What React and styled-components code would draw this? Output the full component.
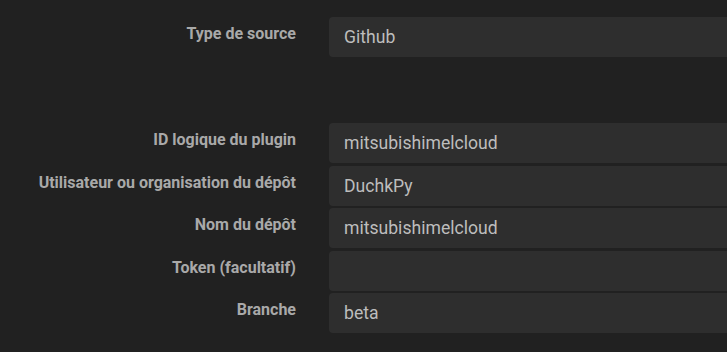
import React from 'react'
import styled, { createGlobalStyle } from 'styled-components'

const GlobalStyle = createGlobalStyle`
    html, body {
        margin: 0;
        padding: 0;
        background-color: #212121;
        overflow: hidden;
    }
    body {
        font-family: Roboto, "Liberation Sans", sans-serif;
    }
`

const Page = styled.div`
    width: 727px;
    height: 352px;
    padding-top: 17px;
    box-sizing: border-box;
    overflow: hidden;
`

const Section = styled.div`
    display: grid;
    grid-template-columns: 296px 560px;
    column-gap: 33px;
    row-gap: 2.5px;
    & + & {
        margin-top: 66px;
    }
`

const Label = styled.label`
    padding-top: 7px;
    text-align: right;
    font-size: 16px;
    line-height: 20px;
    font-weight: 700;
    color: #a9a9a9;
    white-space: nowrap;
`

const Field = styled.div`
    height: 40px;
    box-sizing: border-box;
    padding: 0 15px;
    display: flex;
    align-items: center;
    border-radius: 4px;
    background-color: #2e2e2e;
    font-size: 17.6px;
    color: #bdbdbd;
`

const sourceRows = [
    { label: 'Type de source', value: 'Github' },
]

const repoRows = [
    { label: 'ID logique du plugin', value: 'mitsubishimelcloud' },
    { label: 'Utilisateur ou organisation du dépôt', value: 'DuchkPy' },
    { label: 'Nom du dépôt', value: 'mitsubishimelcloud' },
    { label: 'Token (facultatif)', value: '' },
    { label: 'Branche', value: 'beta' },
]

function Rows ({ rows }) {
    return <Section>
        {rows.map(row => <React.Fragment key={row.label}>
            <Label>{row.label}</Label>
            <Field>{row.value}</Field>
        </React.Fragment>)}
    </Section>
}

export default function App () {
    return <Page>
        <GlobalStyle/>
        <Rows rows={sourceRows}/>
        <Rows rows={repoRows}/>
    </Page>
}
